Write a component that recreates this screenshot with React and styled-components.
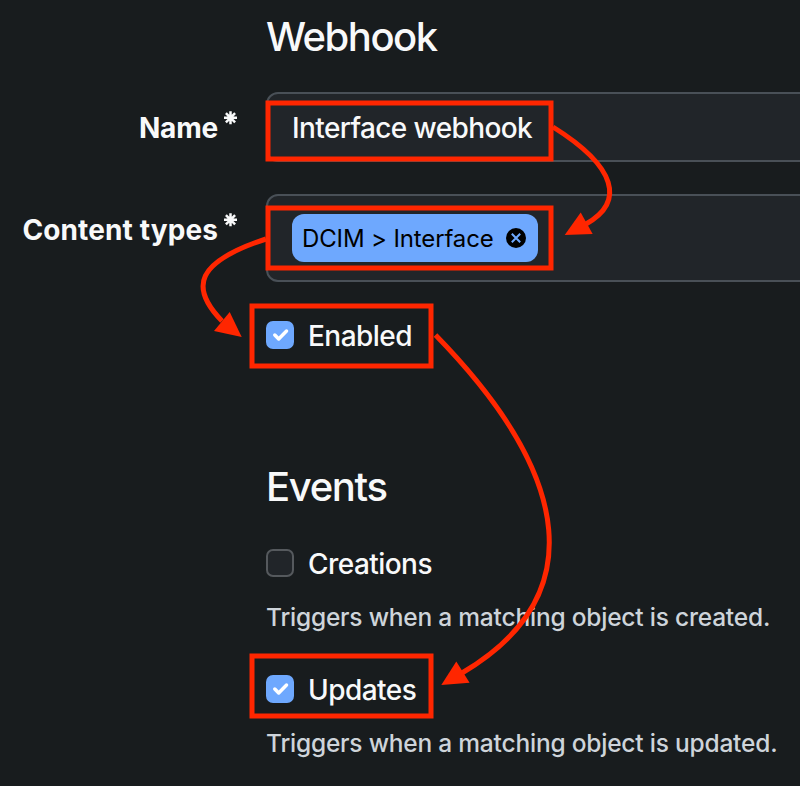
import React from "react";
import styled, { createGlobalStyle } from "styled-components";

const GlobalStyle = createGlobalStyle`
  * { box-sizing: border-box; }
  html, body { margin: 0; background: #181c1e; }
  body { overflow: hidden; }
`;

const Page = styled.main`
  position: relative;
  width: 800px;
  height: 786px;
  overflow: hidden;
  background: #181c1e;
  color: #f8f9fa;
  font: 450 28px/42px Inter, sans-serif;
  white-space: nowrap;
`;

const Section = styled.section`
  padding-top: ${(p) => p.$top}px;
`;

const Heading = styled.h2`
  margin: 0 0 31px 266px;
  font-size: 40px;
  font-weight: 550;
  line-height: 48px;
  letter-spacing: ${(p) => p.$spacing || 0}px;
`;

const Field = styled.div`
  display: grid;
  grid-template-columns: 238px 560px;
  column-gap: 28px;
  align-items: start;
  margin-bottom: 32px;
`;

const Label = styled.label`
  display: flex;
  justify-content: flex-end;
  gap: 5px;
  padding-top: 15px;
  font-weight: 700;
  letter-spacing: ${(p) => p.$spacing || 0}px;

  svg { margin-top: 3px; }
`;

const Control = styled.div`
  display: flex;
  align-items: center;
  height: ${(p) => p.$height}px;
  padding: 0 24px;
  border: 2px solid #495057;
  border-radius: 12px;
  background: #212529;
`;

const InputText = styled.span`
  padding-top: 2px;
  letter-spacing: -0.61px;
`;

const Tag = styled.span`
  display: flex;
  align-items: center;
  justify-content: space-between;
  width: 246px;
  height: 48px;
  padding: 0 12px 0 10px;
  border-radius: 12px;
  background: #6ea8fe;
  color: #000;
  font-size: 24px;
  font-weight: 400;
`;

const TagText = styled.span`
  padding-top: 2px;
  letter-spacing: -0.13px;
`;

const CheckRow = styled.label`
  display: flex;
  align-items: center;
  height: 42px;
  gap: 14px;
  margin-left: 266px;
`;

const Box = styled.span`
  display: flex;
  flex: none;
  align-items: center;
  justify-content: center;
  width: 28px;
  height: 28px;
  margin-top: -1px;
  border: 2px solid ${(p) => (p.$checked ? "#6ea8fe" : "#55595d")};
  border-radius: 7px;
  background: ${(p) => (p.$checked ? "#6ea8fe" : "#212529")};

  svg { flex: none; }
`;

const Caption = styled.span`
  padding-top: 2px;
  letter-spacing: -0.55px;
`;

const Help = styled.p`
  margin: 15px 0 ${(p) => p.$gap || 0}px 266px;
  color: #ced4da;
  font-size: 24.5px;
  line-height: 36px;
  letter-spacing: -0.21px;
`;

const Annotations = styled.svg`
  position: absolute;
  inset: 0;
  pointer-events: none;
`;

function Asterisk() {
  return (
    <svg width="15" height="15" viewBox="0 0 15 15" stroke="#f8f9fa" strokeWidth="2.5">
      <path d="M7.5 1.2v13M1 7.7h13M2.9 3.1l9.2 9.2M12.1 3.1l-9.2 9.2" />
    </svg>
  );
}

function Remove() {
  return (
    <svg width="20" height="20" viewBox="0 0 20 20">
      <circle cx="10" cy="10" r="10" fill="#000" />
      <path d="M5.8 5.8l8.4 8.4M14.2 5.8l-8.4 8.4" stroke="#6ea8fe" strokeWidth="2" />
    </svg>
  );
}

function Check({ label, checked }) {
  return (
    <CheckRow>
      <Box $checked={checked}>
        {checked && (
          <svg width="26" height="26" viewBox="0 0 20 20" fill="none">
            <path d="M6 10l3 3 6-6" stroke="#fff" strokeWidth="2.7" strokeLinecap="round" strokeLinejoin="round" />
          </svg>
        )}
      </Box>
      <Caption>{label}</Caption>
    </CheckRow>
  );
}

export default function App() {
  return (
    <Page>
      <GlobalStyle />
      <Section $top={13}>
        <Heading $spacing={-1.5}>Webhook</Heading>
        <Field>
          <Label $spacing={-0.2}>Name<Asterisk /></Label>
          <Control $height={70}><InputText>Interface webhook</InputText></Control>
        </Field>
        <Field>
          <Label $spacing={0.12}>Content types<Asterisk /></Label>
          <Control $height={88}>
            <Tag><TagText>DCIM &gt; Interface</TagText><Remove /></Tag>
          </Control>
        </Field>
        <Check label="Enabled" checked />
      </Section>
      <Section $top={107}>
        <Heading $spacing={-1.35}>Events</Heading>
        <Check label="Creations" />
        <Help $gap={33}>Triggers when a matching object is created.</Help>
        <Check label="Updates" checked />
        <Help>Triggers when a matching object is updated.</Help>
      </Section>
      <Annotations width="800" height="786" viewBox="0 0 800 786" fill="none" stroke="#ff2600" strokeWidth="5">
        <rect x="268" y="103" width="283" height="56" />
        <rect x="268" y="208" width="283" height="60" />
        <rect x="252" y="306" width="179" height="60" />
        <rect x="252" y="656" width="179" height="60" />
        <path d="M553 127C617 167 625 202 586 224" />
        <path d="M266 239C196 262 189 287 222 321" />
        <path d="M435.5 335C575 478 589 598 462 673" />
        <g fill="#ff2600" stroke="none">
          <path d="M564.7 234.9L580.7 212.5L592.7 234Z" />
          <path d="M241.7 337L229.7 312L214 331Z" />
          <path d="M441.3 685L456.3 661.5L469.6 682.7Z" />
        </g>
      </Annotations>
    </Page>
  );
}
